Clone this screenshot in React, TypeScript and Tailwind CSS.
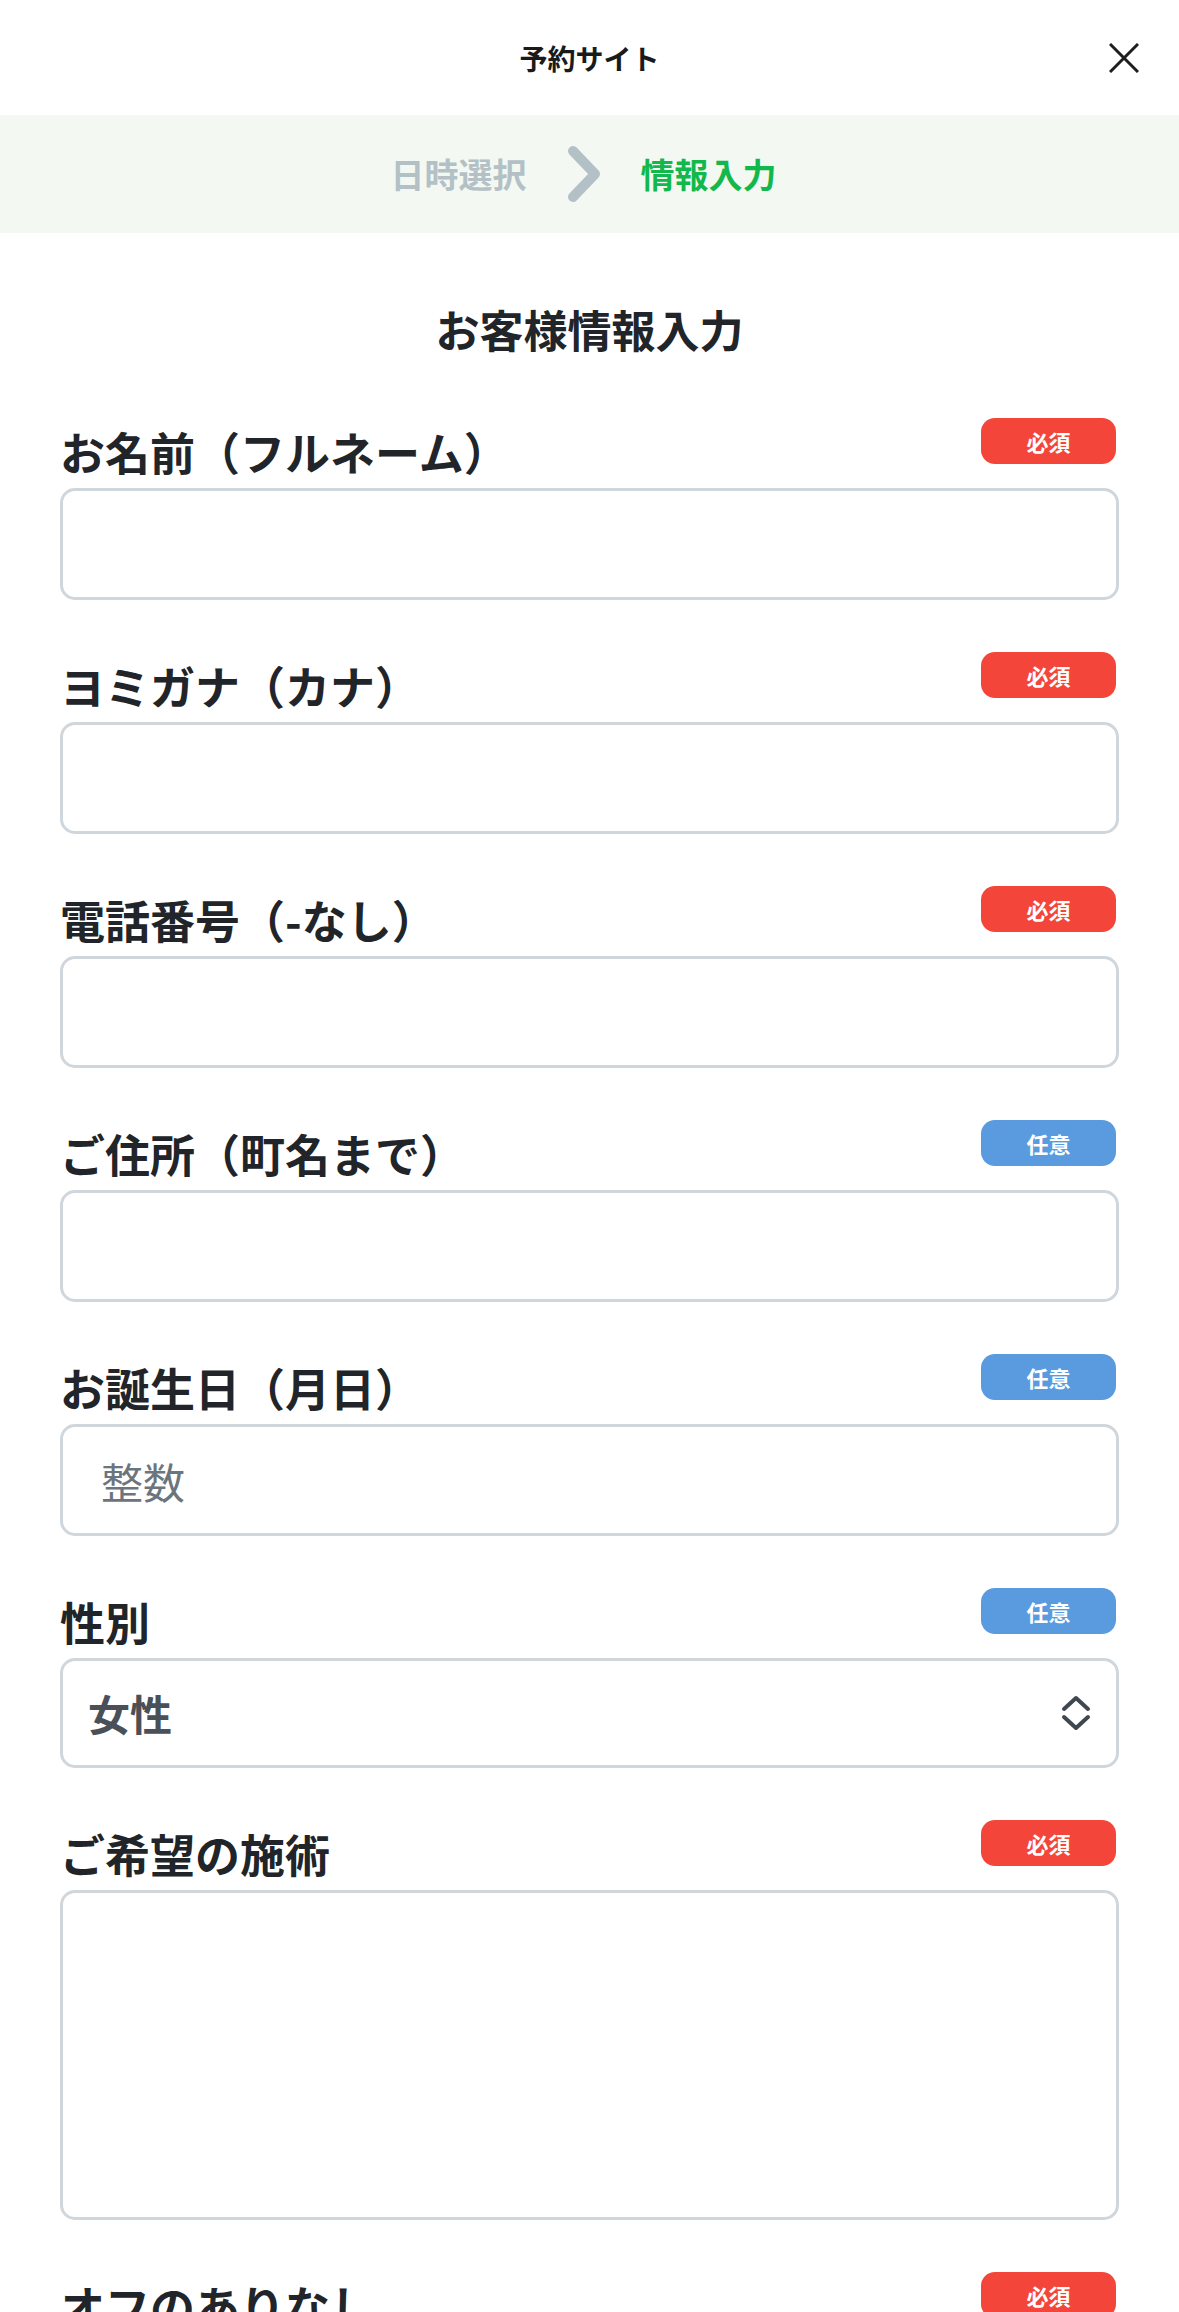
import React from "react";

type Field = {
  label: string;
  required: boolean;
  kind: "input" | "select" | "textarea";
  placeholder?: string;
  value?: string;
};

const fields: Field[] = [
  { label: "お名前（フルネーム）", required: true, kind: "input" },
  { label: "ヨミガナ（カナ）", required: true, kind: "input" },
  { label: "電話番号（-なし）", required: true, kind: "input" },
  { label: "ご住所（町名まで）", required: false, kind: "input" },
  { label: "お誕生日（月日）", required: false, kind: "input", placeholder: "整数" },
  { label: "性別", required: false, kind: "select", value: "女性" },
  { label: "ご希望の施術", required: true, kind: "textarea" },
  { label: "オフのありなし", required: true, kind: "input" },
];

const Badge = ({ required }: { required: boolean }) => (
  <span
    className={`flex h-[46px] w-[135px] shrink-0 items-center justify-center rounded-[14px] text-[22px] font-bold leading-none text-white ${
      required ? "bg-[#f4453a]" : "bg-[#5a9ade]"
    }`}
  >
    {required ? "必須" : "任意"}
  </span>
);

const App = () => {
  return (
    <div
      className="min-h-screen bg-white text-[#212529]"
      style={{ fontFamily: '"Noto Sans CJK JP", "Noto Sans", sans-serif' }}
    >
      {/* header */}
      <header className="grid h-[115px] grid-cols-[1fr_auto_1fr] items-center px-[40px]">
        <div />
        <h1 className="text-[28px] font-bold leading-none text-[#1a1a1a]">予約サイト</h1>
        <button className="justify-self-end">
          <svg width="30" height="30" viewBox="0 0 30 30" fill="none" stroke="#1f1f1f" strokeWidth="3">
            <path d="M1 1 L29 29 M29 1 L1 29" />
          </svg>
        </button>
      </header>

      {/* steps */}
      <div className="flex h-[118px] items-center justify-center gap-[40px] bg-[#f3f9f2] pr-[12px]">
        <span className="text-[34px] font-bold leading-none text-[#b3c1c6]">日時選択</span>
        <svg width="34" height="58" viewBox="0 0 34 58" fill="none">
          <path d="M6 6 L28 29 L6 52" stroke="#b3c1c6" strokeWidth="10" strokeLinecap="round" strokeLinejoin="round" />
        </svg>
        <span className="text-[34px] font-bold leading-none text-[#12b84c]">情報入力</span>
      </div>

      <main className="px-[60px] pb-[80px]">
        <h2 className="mt-[74px] mb-[67px] text-center text-[44px] font-bold leading-none">お客様情報入力</h2>

        <div className="flex flex-col gap-[52px]">
          {fields.map((f) => (
            <div key={f.label} className="flex flex-col">
              <div className="flex h-[70px] justify-between">
                <label className="self-end pb-[14px] text-[45px] font-bold leading-none text-[#212529]">
                  {f.label}
                </label>
                <span className="mr-[3px]">
                  <Badge required={f.required} />
                </span>
              </div>
              {f.kind === "input" && (
                <input
                  className="h-[112px] w-full rounded-[15px] border-[3px] border-[#cfd6dc] bg-white px-[38px] text-[42px] text-[#212529] outline-none placeholder:text-[#6c757d]"
                  placeholder={f.placeholder}
                />
              )}
              {f.kind === "select" && (
                <div className="flex h-[110px] w-full items-center justify-between rounded-[15px] border-[3px] border-[#cfd6dc] bg-white pl-[25px] pr-[25px]">
                  <span className="text-[42px] font-bold leading-none text-[#495057]">{f.value}</span>
                  <svg width="30" height="36" viewBox="0 0 30 36" fill="none" stroke="#3f4750" strokeWidth="4" strokeLinecap="round" strokeLinejoin="round">
                    <path d="M3 14 L15 3 L27 14" />
                    <path d="M3 22 L15 33 L27 22" />
                  </svg>
                </div>
              )}
              {f.kind === "textarea" && (
                <textarea className="h-[330px] w-full resize-none rounded-[15px] border-[3px] border-[#cfd6dc] bg-white px-[38px] py-[24px] text-[42px] outline-none" />
              )}
            </div>
          ))}
        </div>
      </main>
    </div>
  );
};

export default App;
